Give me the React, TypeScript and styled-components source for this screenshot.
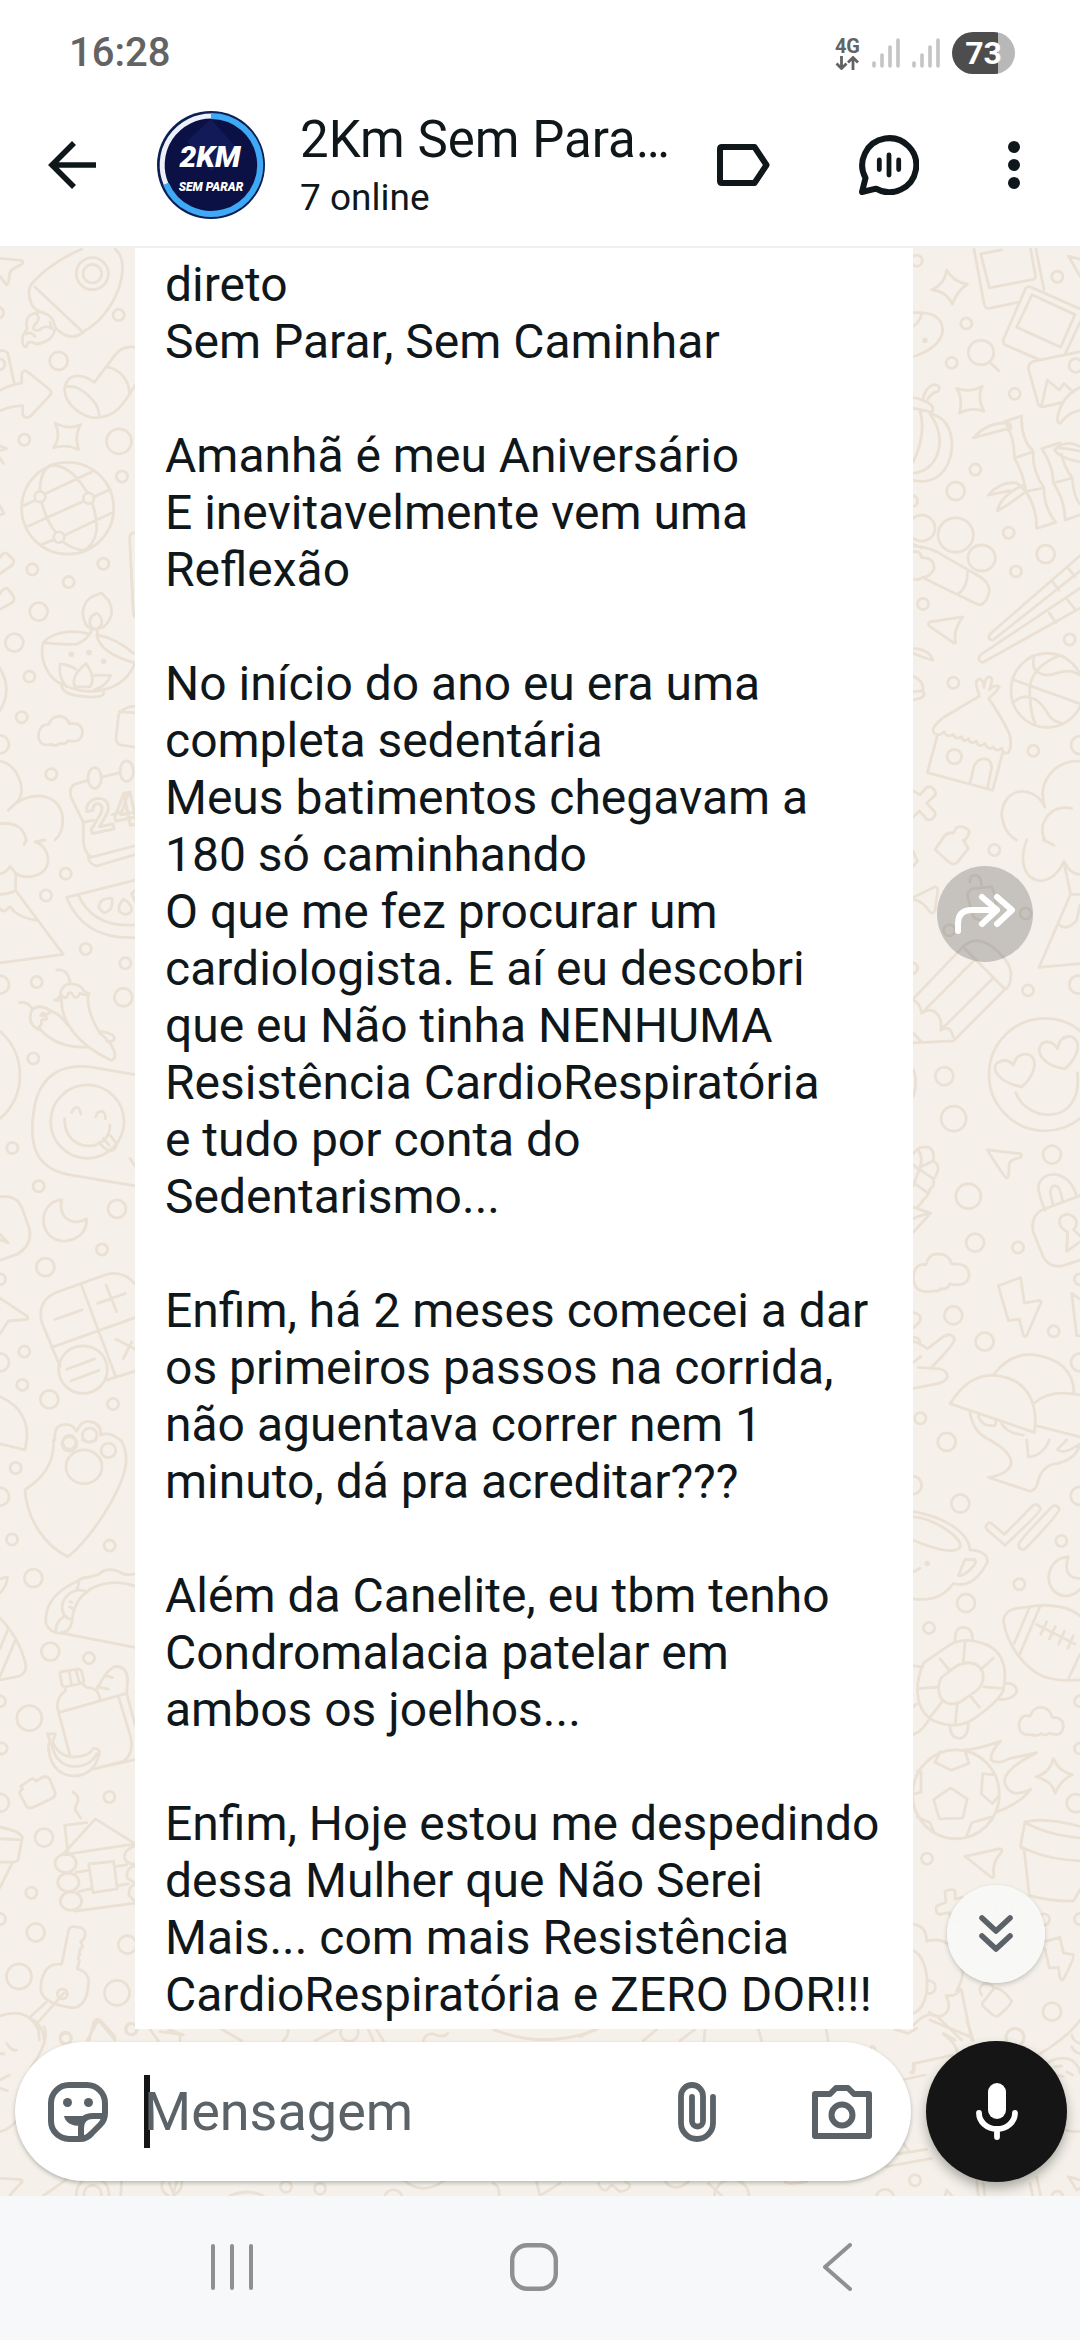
import React from "react";
import styled, { createGlobalStyle } from "styled-components";

const ink = "#0f171b";
const grey = "#5b6368";
const paper = "#f5f1ea";
const doodle = "#eae0d4";

const GlobalStyle = createGlobalStyle`
  *, *::before, *::after { box-sizing: border-box; }
  body {
    margin: 0;
    background: #fff;
    color: ${ink};
    font-family: Roboto, "Noto Sans", sans-serif;
  }
  button { font: inherit; color: inherit; }
`;

const Screen = styled.div`
  display: flex;
  flex-direction: column;
  min-height: 100vh;
`;

const StatusBar = styled.div`
  display: flex;
  align-items: center;
  justify-content: space-between;
  height: 106px;
  padding: 0 65px 0 69px;
  color: #636363;
`;

const Clock = styled.time`
  font-size: 40px;
  line-height: 48px;
  font-weight: 500;
`;

const StatusIcons = styled.div`
  display: flex;
  align-items: center;
  gap: 12px;
`;

const Network = styled.div`
  display: flex;
  flex-direction: column;
  align-items: center;
  font-size: 20px;
  line-height: 20px;
  font-weight: 700;
`;

const Battery = styled.div`
  display: flex;
  align-items: center;
  justify-content: center;
  width: 63px;
  height: 42px;
  border-radius: 21px;
  background: linear-gradient(90deg, #4d4d4d 73%, #b8b8b8 73%);
  color: #fff;
  font-size: 32px;
  line-height: 42px;
  font-weight: 700;
`;

const Header = styled.header`
  display: flex;
  align-items: center;
  padding: 4px 60px 26px 48px;
  border-bottom: 2px solid #efefef;
`;

const IconButton = styled.button`
  display: flex;
  align-items: center;
  justify-content: center;
  flex: none;
  padding: 0;
  border: 0;
  background: none;
  cursor: pointer;
`;

const Avatar = styled.div`
  display: flex;
  flex: none;
  margin: 0 35px 0 61px;
`;

const Heading = styled.div`
  display: flex;
  flex-direction: column;
  gap: 6px;
  flex: 1;
  min-width: 0;
`;

const Title = styled.h1`
  margin: 0;
  font-size: 51px;
  line-height: 60px;
  font-weight: 400;
  white-space: nowrap;
`;

const Subtitle = styled.p`
  margin: 0;
  font-size: 37px;
  line-height: 44px;
`;

const Actions = styled.div`
  display: flex;
  align-items: center;
  gap: 89px;
`;

const Chat = styled.main`
  position: relative;
  display: flex;
  flex-direction: column;
  flex: 1;
  background: ${paper};
`;

const Backdrop = styled.svg`
  position: absolute;
  inset: 0;
  width: 100%;
  height: 100%;
`;

const Messages = styled.div`
  position: relative;
  flex: 1;
  display: flex;
  padding: 0 167px 0 135px;
`;

const Bubble = styled.article`
  flex: 1;
  padding: 8px 20px 6px 30px;
  background: #fff;
`;

const Paragraph = styled.p`
  margin: 0;
  font-size: 48px;
  line-height: 57px;
  white-space: pre-wrap;

  & + & {
    margin-top: 57px;
  }
`;

const RoundButton = styled(IconButton)<{ $size: number; $top: number; $right: number; $fill: string; $raised?: boolean }>`
  position: absolute;
  top: ${(p) => p.$top}px;
  right: ${(p) => p.$right}px;
  width: ${(p) => p.$size}px;
  height: ${(p) => p.$size}px;
  border-radius: 50%;
  background: ${(p) => p.$fill};
  box-shadow: ${(p) => (p.$raised ? "0 2px 5px rgba(0, 0, 0, 0.2)" : "none")};
`;

const Composer = styled.form`
  position: relative;
  display: flex;
  align-items: center;
  gap: 15px;
  padding: 12px 13px 14px 15px;
`;

const Field = styled.div`
  display: flex;
  align-items: center;
  flex: 1;
  min-width: 0;
  height: 139px;
  padding: 0 39px 0 33px;
  border-radius: 70px;
  background: #fff;
  box-shadow: 0 2px 4px rgba(0, 0, 0, 0.25);
`;

const Caret = styled.span`
  flex: none;
  width: 6px;
  height: 73px;
  margin: 0 -6px 0 36px;
  background: #151515;
`;

const TextInput = styled.input`
  position: relative;
  flex: 1;
  width: 0;
  min-width: 0;
  height: 73px;
  padding: 0;
  border: 0;
  outline: 0;
  background: transparent;
  color: ${ink};
  font: 400 54px/73px Roboto, "Noto Sans", sans-serif;

  &::placeholder {
    color: ${grey};
    opacity: 1;
  }
`;

const FieldActions = styled.div`
  display: flex;
  align-items: center;
  gap: 96px;
`;

const MicButton = styled(IconButton)`
  width: 141px;
  height: 141px;
  border-radius: 50%;
  background: #151515;
  box-shadow: 0 6px 12px rgba(0, 0, 0, 0.3);
`;

const NavBar = styled.nav`
  display: grid;
  grid-template-columns: repeat(3, 1fr);
  align-items: center;
  height: 144px;
  padding: 0 92px 2px 81px;
  background: #f7f8fa;
`;

type Spot = [number, number];

interface Patch {
  x: number;
  y: number;
  sx: number;
  sy: number;
  small: Spot[];
  medium: Spot[];
  large?: Spot[];
  solid?: Spot[];
  ovals?: [number, number, number, number][];
  d: string;
}

const tall = { sx: 3, sy: 2.6133 };
const flat = { sx: 3, sy: 3 };

const patches: Patch[] = [
  {
    x: 0, y: 240, ...tall,
    small: [[356, 196], [73, 522], [366, 618], [97, 861], [310, 846], [206, 894], [88, 1141], [65, 1247], [154, 1396], [-6, 190], [-2, 325]],
    medium: [[176, 316], [116, 971], [43, 1052], [0, 1318]],
    large: [[357, 526]],
    solid: [[214, 1083], [267, 1078], [311, 1101]],
    ovals: [[277, 88, 48, 42], [277, 88, 28, 24], [203, 701, 138, 120], [120, 671, 16, 14], [266, 675, 16, 14], [177, 777, 16, 14], [284, 1406, 20, 27], [380, 1388, 20, 27]],
    d: `M0 48L64 53Q74 56 64 64L40 75Q30 80 28 92Q26 118 20 118L0 95
      M92 118C130 75 200 40 245 24M345 24C375 45 370 90 355 130C330 185 290 220 250 240Q210 270 165 228M92 118Q80 140 95 168Q105 185 130 190M104 122L250 242
      M110 190Q75 195 80 225Q85 232 75 240Q62 255 70 275Q80 285 82 272Q85 262 110 272Q165 265 165 225Q160 200 135 192Q120 185 108 192Q125 205 105 220Q90 240 120 235Q125 225 150 228Q160 240 150 215M80 245Q90 238 105 252
      M0 393Q30 378 65 374V350Q70 338 82 344L148 390Q158 398 148 408L92 460Q75 470 68 455V433Q30 435 0 446M0 290Q22 285 26 305L42 372
      M405 280C360 275 350 295 320 330L283 372C250 350 205 345 194 385C190 430 250 465 290 465C350 460 370 430 405 380M197 384C240 375 300 425 297 460M320 332C360 335 390 370 388 404
      M165 478Q205 498 242 482Q222 512 236 548Q200 532 160 543Q185 515 165 478Z
      M72 694L105 680M134 664L275 606M84 748L250 683M280 672L325 654M127 795L163 783M192 772L333 714M119 657Q122 590 165 586M155 588C210 590 240 630 262 660M278 690Q295 745 288 765Q280 800 250 812M125 686Q140 735 168 765M188 788Q210 805 250 812
      M305 923Q275 930 262 942Q235 975 262 1010Q280 1022 310 1012Q350 980 326 942ZM290 975Q262 985 272 1010Q290 1025 305 1005Q308 985 290 975Z
      M130 1052Q150 1030 200 1024Q240 1022 268 1030M272 1018Q276 1026 268 1030M292 1018V1032Q350 1042 400 1080M130 1052C115 1100 150 1150 185 1160C260 1195 370 1185 405 1105M130 1052Q180 1058 230 1056Q260 1045 270 1028M290 1032Q300 1080 405 1105
      M180 1108Q210 1110 228 1122M180 1108Q175 1145 200 1168M225 1168Q210 1140 258 1107Q290 1145 270 1168ZM275 1140Q290 1135 332 1138Q320 1165 285 1175M185 1160Q180 1185 240 1192Q310 1200 312 1182
      M155 1318Q115 1325 115 1293Q120 1265 146 1266Q155 1245 178 1244Q200 1245 208 1264Q248 1260 247 1288Q245 1315 205 1308Q195 1320 182 1315Q165 1325 155 1318Z
      M405 1218Q370 1220 356 1240L348 1300Q348 1318 365 1320L405 1325M358 1232L405 1236
      M250 1568V1522L214 1458Q205 1430 225 1422L262 1412M304 1404L360 1392M250 1522L280 1516M335 1502L360 1496
      M0 830Q12 812 22 820L40 835Q44 842 36 850L0 872M0 925Q12 905 24 912L40 930Q46 940 36 948L0 965M0 1120Q38 1175 0 1230
      M0 1362C50 1370 80 1430 55 1465L25 1490C80 1435 180 1440 188 1510Q190 1550 165 1568M0 1525Q70 1520 78 1568M0 538L20 545L0 550M0 570L10 584M0 695L12 715L0 718M405 765Q388 765 389 780L400 975Q402 985 405 985`,
  },
  {
    x: 0, y: 840, ...tall,
    small: [[197, 88], [138, 145], [257, 285], [376, 322], [110, 371], [100, 571], [37, 805], [116, 905], [306, 1070], [73, 1337], [67, 1424], [339, 1474], [0, 1148]],
    medium: [[136, 1116], [148, 1462], [351, 964], [370, 411], [0, 378], [0, 1365]],
    ovals: [[262, 736, 110, 96], [249, 1384, 73, 62], [269, 1555, 22, 18], [208, 1574, 20, 18]],
    d: `M72 12L80 0M105 5C150 15 160 75 115 90Q75 105 45 85L30 68Q20 85 0 88M105 5L135 0M47 85V132Q25 142 0 142M47 132L190 299L0 321M0 178Q8 192 22 180Q30 168 40 185Q65 205 112 210
      M250 0Q252 35 275 45L405 15M265 38Q262 62 290 68L405 38
      M405 105L200 150Q250 260 405 255M235 144Q280 230 405 222M335 152Q300 150 296 175Q310 200 330 182Q340 170 335 152ZM370 155Q350 175 360 188Q380 202 395 185Q395 165 370 155ZM405 160L395 140L405 132
      M170 340Q205 335 210 375M165 418Q182 415 183 395Q190 375 215 376Q245 378 252 395L268 402Q255 408 240 400Q235 415 222 410Q215 395 205 400Q200 418 190 410Q182 400 182 415Q170 422 165 418M185 415C180 470 230 535 335 576Q350 572 342 550Q330 525 300 505Q260 450 264 405M300 500Q345 505 343 520Q335 530 320 525
      M58 425Q80 420 98 442M115 495Q80 480 95 445Q115 425 155 448L140 456Q125 450 122 458Q145 460 138 470Q120 465 125 480Q110 500 115 490Q170 545 260 541M155 448Q180 455 205 485
      M0 500C80 560 80 670 0 728M405 613L270 593C150 580 115 650 105 690C80 800 110 860 210 875L405 904M390 832L405 852
      M215 712Q222 695 235 700Q243 708 243 716M287 724Q292 705 310 710Q318 716 316 728M194 728C190 820 330 820 330 745M297 790Q310 805 325 812Q345 815 350 795Q335 775 325 768M310 780L328 798
      M0 932Q50 928 65 960L88 1015Q98 1060 50 1083L0 1098M0 1045L25 1053L0 1030
      M186 940C110 945 110 1050 198 1048Q260 1040 260 990Q215 1010 190 980Q178 960 186 940ZM0 1197L82 1245Q86 1250 80 1253L25 1257L0 1290
      M405 1160Q370 1125 320 1135L170 1182Q110 1205 125 1260L180 1375M155 1326L405 1248M243 1160L347 1402M315 1413L405 1388M165 1253L246 1228M293 1211L376 1185M318 1163L350 1233M348 1305L405 1330M370 1355L395 1312M200 1383L284 1356M214 1413L297 1386
      M0 1455C70 1480 85 1530 80 1568M165 1568Q160 1525 200 1528Q215 1525 230 1545Q245 1515 270 1520Q305 1525 302 1555Q330 1545 360 1568`,
  },
  {
    x: 0, y: 1440, ...tall,
    small: [[47, 73], [36, 260], [329, 276], [267, 570], [328, 933], [94, 1183], [0, 683], [5, 806], [0, 1252], [197, 1562], [395, 1540]],
    medium: [[100, 361], [151, 553], [132, 1039], [107, 1287], [0, 148], [0, 948], [382, 1319]],
    large: [[88, 727], [57, 1402], [351, 1445]],
    ovals: [[252, 70, 54, 44], [208, 10, 22, 19], [325, 27, 22, 19], [197, 1106, 32, 24], [205, 1156, 32, 24], [213, 1205, 32, 24], [187, 1448, 15, 13]],
    d: `M0 10L75 26L80 0M160 0C165 60 130 100 75 130C80 210 140 280 204 305C270 260 370 130 378 60Q380 20 362 0M248 0Q265 12 288 0
      M0 363L22 358Q22 380 0 400M0 465Q60 520 78 590Q78 612 55 618L0 627M24 495L0 545M45 525L0 618
      M405 350Q375 355 360 345Q320 330 295 352L268 358Q240 360 230 370Q130 410 138 480Q150 505 185 505L405 542M405 382Q330 360 270 390Q220 420 217 470Q210 505 185 502M238 368L232 388M262 398Q235 385 210 400Q180 420 188 448Q195 465 212 468M190 462Q165 478 168 500M208 436L218 440M210 422L216 424
      M180 612Q178 605 188 605L235 598Q245 600 247 612L252 628Q250 635 240 637L195 645Q185 645 184 632ZM208 608L215 640M228 602L238 634M195 648Q200 655 190 660Q165 680 175 710L210 825M248 635Q255 648 268 648Q295 650 300 675M178 712L380 662M292 650Q320 600 345 592Q380 590 383 625L380 662Q395 710 405 745M356 672L390 770Q405 820 370 840L278 860L405 835M315 615L338 621M292 645L325 651
      M142 768H166L158 790Q185 840 250 825Q270 820 280 806Q300 805 298 820Q280 880 215 878Q150 870 145 800L150 785ZM155 795Q165 845 215 853Q270 855 290 820
      M62 905L90 888Q103 882 108 892L130 880Q145 878 150 888L165 920Q168 932 155 937L100 960Q85 965 78 955L58 922Q62 915 68 912Z
      M218 920Q240 930 232 948Q220 965 232 975L242 988M204 1078L194 1007L260 1000M188 1084L286 990L405 1055M188 1084L400 1056M228 1130L268 1124M236 1180L276 1172M225 1231L405 1210M345 1115L380 1110M350 1165L385 1160M266 1108L341 1101L352 1173L279 1183ZM405 1060Q365 1075 375 1095Q385 1110 405 1108M405 1112Q375 1120 382 1145L405 1158M405 1162Q385 1165 387 1190L405 1206
      M0 1012Q60 1022 67 1038L55 1095Q50 1105 35 1103H0M0 1042L65 1045M38 1103L0 1170
      M185 1370L205 1285Q208 1270 222 1272L245 1275Q258 1282 255 1295Q255 1305 242 1310L248 1325Q235 1330 240 1345Q230 1350 238 1360L232 1382C275 1392 268 1420 260 1450Q245 1490 205 1482Q120 1470 122 1430Q128 1365 185 1370ZM192 1445L118 1518M138 1470L88 1510L108 1520
      M0 1505Q80 1480 115 1540L118 1568M110 1520Q132 1545 132 1568M268 1568L282 1520Q292 1508 305 1520L345 1560`,
  },
  {
    x: 910, y: 240, ...tall,
    small: [[20, 54], [442, 96], [169, 218], [125, 321], [314, 402], [196, 600], [296, 765], [318, 866], [39, 951], [479, 1044], [130, 1157], [370, 1335], [6, 682]],
    medium: [[137, 656], [407, 821], [510, 1320]],
    solid: [[45, 262]],
    ovals: [[497, 328, 20, 18], [213, 294, 38, 32], [137, 771, 53, 45], [215, 831, 41, 34], [35, 753, 40, 34], [412, 1177, 109, 97], [133, 1350, 22, 19]],
    d: `M110 78Q130 110 172 115Q140 135 127 168Q110 135 66 130Q105 115 110 78Z
      M192 24L222 165Q225 182 240 178L330 162M212 36L238 125L370 103Q378 100 376 92L362 24M212 36L275 26M378 24L402 130M360 122Q350 120 345 130L280 260Q278 272 288 275L385 312M360 122L510 180M366 143L320 228L452 280L495 195ZM510 215L465 298
      M510 292L370 317Q352 325 356 340L385 430Q392 438 405 435L455 425M395 432L412 366L448 392L462 375L490 398M510 385Q450 410 442 470Q445 485 455 475Q475 450 510 445M510 50L475 42L510 95
      M10 190Q95 185 98 235Q95 280 10 305M35 192Q30 215 10 225M240 320L267 342M140 388Q180 400 217 382Q200 412 222 448Q185 435 148 453Q160 415 140 388Z
      M10 412Q38 415 62 430Q75 440 65 450Q45 445 10 440M38 420Q45 385 70 378Q95 378 85 395Q60 400 50 422M68 455C120 470 125 510 126 540C120 610 70 640 10 628M60 455C110 510 95 600 10 610M30 445Q50 505 10 580
      M285 474L335 460Q332 520 370 553Q365 600 402 648Q400 695 437 738L380 754Q380 700 348 657Q340 610 313 570Q315 520 285 474ZM313 570L370 553M348 657L402 648M190 517Q240 470 300 480Q310 500 285 495ZM235 667Q270 630 320 635L348 657Q300 690 262 708Q270 670 340 640M235 667L300 655
      M395 545L450 530M395 545Q430 590 430 635Q465 680 465 732L510 718M430 635L487 622M455 560Q460 590 487 622Q490 670 510 690M433 548Q470 520 510 540M433 548Q450 570 510 580M440 543Q480 545 510 552
      M510 825L240 1030Q230 1045 250 1045L510 865M510 910L210 1085Q200 1100 218 1104L510 962M425 890L447 915M472 855L495 880M418 975L438 1000M472 940L495 965
      M10 800Q60 800 110 830Q170 860 210 880Q245 900 236 925Q225 955 205 953Q90 905 38 882Q25 890 10 886M10 815Q30 810 35 830Q75 830 72 860Q60 880 38 882M172 865Q175 905 145 925M10 795L35 805
      M158 985L60 998Q50 1003 60 1010L130 1052Q138 1056 136 1046Q130 1020 158 985ZM10 1068Q60 1070 68 1098Q50 1095 10 1080M10 1140Q45 1155 38 1178L10 1180M38 1178Q55 1195 10 1202
      M313 1150L510 1212M450 1085Q350 1120 360 1190Q362 1240 375 1262M372 1092C360 1130 400 1145 440 1132Q480 1120 505 1135M315 1205Q340 1185 375 1200Q400 1215 415 1240Q430 1260 455 1262
      M208 1192C200 1165 190 1150 210 1147Q220 1150 222 1170Q225 1140 240 1142Q252 1145 238 1175Q255 1160 268 1168Q255 1185 236 1198Q270 1240 298 1290Q308 1325 295 1340Q280 1345 275 1328Q258 1340 250 1325Q232 1335 225 1315Q205 1330 200 1310Q180 1320 175 1303Q160 1315 155 1298Q135 1308 130 1292Q110 1302 102 1285Q85 1300 72 1288Q60 1275 100 1248ZM82 1295L52 1392L248 1438L278 1340M180 1420L192 1375Q205 1350 235 1358Q250 1370 242 1390L232 1435
      M10 1440L30 1450L50 1430Q65 1425 75 1440Q80 1450 70 1455L50 1472L75 1495Q78 1510 60 1515Q50 1518 45 1508L28 1492L10 1508M95 1568Q110 1545 130 1550L140 1535Q160 1528 178 1545Q175 1560 165 1568
      M510 1362C430 1360 380 1420 405 1482C370 1420 280 1430 275 1500Q280 1550 320 1568M485 1485Q420 1475 398 1530Q395 1555 405 1568`,
  },
  {
    x: 910, y: 840, ...tall,
    small: [[253, 26], [347, 192], [118, 236], [354, 393], [324, 1065], [431, 1284], [31, 1511], [6, 335], [510, 1148]],
    medium: [[103, 617], [195, 1052], [426, 822], [130, 1242], [224, 1311], [505, 378], [510, 1365]],
    large: [[131, 728], [175, 931]],
    ovals: [[405, 613, 168, 147]],
    d: `M95 0L75 25L120 60Q135 68 145 55L175 22L160 0M10 68L22 55L10 30M10 150L75 122Q85 125 83 135L75 185Q70 195 60 188Q40 160 10 155
      M180 110Q178 92 195 92Q212 92 215 118M172 145Q175 132 185 128L245 122Q255 140 258 165Q258 190 225 210Q200 210 190 200Z
      M350 0C325 60 345 105 395 107Q440 100 462 55Q480 90 510 90M400 0L432 14M462 60L482 142H510M480 145L387 333L510 323M445 220Q470 240 500 210L510 170
      M10 415L160 278Q195 250 240 275Q310 320 302 360Q300 385 285 390L130 525L10 530M160 280L285 390M35 453L195 312M92 497L248 362M10 418Q30 425 35 453C70 430 100 460 92 497Q120 480 130 515M10 505L35 528M10 600Q25 635 10 670
      M335 645C270 635 240 600 262 582Q290 568 310 588Q320 555 355 560C390 575 370 620 335 645ZM465 598C400 590 375 555 395 532Q420 518 443 545Q450 510 485 514C520 530 500 570 465 598ZM317 660C350 740 520 750 502 608
      M232 810L332 820Q338 825 330 830Q298 835 297 850Q298 885 288 883Q275 870 232 810Z
      M10 820Q30 795 60 805Q75 815 70 838Q90 850 82 868Q75 885 70 885Q75 905 60 912Q55 930 40 940Q30 955 20 960M10 850L70 885M10 895L50 920M30 855L70 838M25 810Q40 830 30 855L10 905M10 960L62 975L10 1025M10 990Q30 980 62 975
      M405 968Q385 925 385 905C395 860 480 860 500 932M430 955Q410 900 438 904Q450 905 458 945M510 930L395 967Q360 985 370 1025L400 1090Q420 1120 460 1112L510 1098M510 1050L470 1075L473 1025C440 1010 440 980 475 978Q505 985 498 1010L490 1018L510 1035
      M70 1178Q10 1190 10 1140Q15 1105 48 1110Q55 1080 85 1082Q115 1080 125 1108Q180 1105 177 1140Q170 1170 120 1160Q110 1178 92 1172Q85 1182 70 1178Z
      M265 1165L332 1143L343 1210L390 1203Q397 1208 390 1215L350 1295Q345 1300 340 1295L328 1252L295 1256ZM510 1200L485 1185L500 1295L510 1296
      M10 1300Q30 1300 30 1315M10 1235Q40 1240 28 1260L10 1275M10 1310Q40 1320 52 1330L100 1298Q125 1285 134 1305Q130 1320 65 1378M25 1378L90 1382Q115 1388 112 1405Q100 1420 75 1422L10 1433M10 1365L32 1350
      M250 1398Q300 1340 370 1345Q490 1360 492 1445M120 1473Q180 1390 260 1400C360 1410 385 1480 373 1548ZM375 1470Q420 1435 510 1450M375 1530L510 1560M180 1497Q190 1550 240 1568M205 1505Q215 1535 255 1530L258 1520M275 1525Q290 1550 340 1555`,
  },
  {
    x: 910, y: 1440, ...tall,
    small: [[454, 264], [328, 377], [57, 491], [51, 1094], [402, 1253], [510, 683], [510, 806], [510, 1252]],
    medium: [[110, 5], [151, 166], [168, 426], [8, 118], [509, 146], [497, 949], [426, 1494], [315, 1562], [282, 1222]],
    solid: [[52, 323]],
    ovals: [[138, 926, 130, 116]],
    d: `M240 0Q310 35 303 65Q290 90 235 98L360 134Q380 130 385 105Q400 65 440 62Q500 50 510 10M350 0L355 45Q400 40 418 0M442 25Q460 40 510 10M442 25L470 0
      M228 225Q235 210 250 222L283 247L370 170Q385 165 392 180Q390 190 285 275L232 235Q226 230 228 225ZM425 175Q440 165 448 180Q450 190 345 285Q330 290 325 275Q325 265 425 175Z
      M10 187C100 200 175 240 180 287Q235 290 232 320Q190 390 130 375Q90 425 10 415M10 200C70 205 160 255 150 280Q130 305 10 262M145 355L165 312L195 313Q200 320 190 330Q165 355 145 355ZM10 345L30 335
      M475 305C400 310 395 405 470 408Q495 405 510 390M475 305Q455 360 510 362
      M280 470Q285 445 320 440L390 432Q470 430 510 460M280 470C290 540 350 600 400 618Q450 632 510 627M360 435L312 532M390 435L328 562M380 482L495 533M410 475L392 508M436 487L418 520M463 500L446 533M490 512L473 545M510 560L475 625
      M42 582L120 535Q160 515 215 530C290 550 290 610 280 655Q260 690 180 735Q130 755 75 735C15 710 10 640 42 582ZM95 620L140 590Q190 570 215 600Q230 630 200 655L150 685Q110 700 90 670Q80 640 95 620ZM165 530L160 580M90 572L120 603M250 570L212 600M222 645L282 650M182 670L208 698M142 690L136 740M100 680L62 722M22 650L82 646M135 525Q135 488 160 490Q190 490 187 525M283 635Q322 635 320 658Q310 680 265 678M120 745Q120 780 150 780Q175 775 175 740M10 590L38 593M20 690L10 697M62 722Q40 760 10 770
      M365 770Q325 775 327 740Q335 715 360 722Q370 698 393 698Q420 700 427 725Q462 725 460 750Q455 778 418 766Q405 775 395 767Q380 775 365 770Z
      M122 909L172 938L158 988L88 990L71 940ZM90 815L75 842L123 863L177 845L165 812M252 875L218 872L214 925L247 950L266 930M22 865L33 868V920L12 925M22 985L60 1000L72 1025M245 985L185 1000L170 1035M165 810Q205 808 272 787Q240 815 243 835Q260 850 300 832L380 817Q280 860 284 895Q300 940 362 913Q330 950 260 972
      M430 832Q445 865 487 875Q450 890 436 923Q425 890 378 880Q420 870 430 832ZM165 1088L270 1068Q280 1070 272 1080Q245 1105 252 1140Q250 1148 240 1140Z
      M345 998Q400 985 510 1010M345 998Q400 1030 510 1040M345 998L332 1058Q330 1068 342 1068M332 1062Q400 1095 510 1100M342 1068L358 1190Q410 1205 490 1205L510 1175
      M105 1180Q120 1172 135 1177V1200L155 1195M105 1180L108 1208L80 1218Q75 1235 88 1240L118 1235Q125 1260 140 1265L160 1250
      M405 1310L450 1300L460 1340L490 1345Q495 1350 460 1410Q455 1415 450 1405L445 1378L418 1380L405 1330M215 1450Q200 1430 225 1420Q245 1420 250 1430M218 1470L250 1435Q270 1425 305 1465Q305 1475 265 1505Q255 1512 220 1480Q215 1475 218 1470
      M10 1265Q50 1270 50 1310Q90 1300 120 1320M140 1440Q165 1400 155 1380M108 1452Q130 1490 95 1505Q70 1510 58 1495M108 1452Q140 1455 152 1435M10 1335C60 1350 70 1480 10 1498M55 1412Q80 1415 75 1435Q70 1450 50 1445M10 1530Q50 1490 80 1505L155 1568M155 1440L185 1568M100 1550L135 1568`,
  },
  {
    x: 0, y: 2020, ...flat,
    small: [[858, 500], [960, 506], [197, 57], [393, 27]],
    medium: [[1180, 536], [1048, 37]],
    ovals: [[278, 522, 49, 49], [278, 522, 26, 26]],
    d: `M132 20Q150 60 95 140M20 70Q35 95 50 90M0 100L12 102M0 180L28 165M0 205L22 212M0 335Q30 330 60 290
      M0 475L60 478Q72 482 62 490L30 525M130 527L200 478M365 480L362 527M490 480Q475 510 505 527M545 480Q550 510 520 527M508 490L520 520L530 485M690 527Q740 505 790 527M1210 480Q1270 530 1335 480M1480 490Q1500 500 1497 527
      M262 60L295 0L345 60M450 28L475 62M480 35L540 42V62M505 28L550 45M665 28L725 62M865 28Q865 50 850 62M945 62L1010 28M1105 28L1120 62M1130 30L1150 62M1270 62Q1275 40 1300 42Q1330 55 1343 40M1479 28Q1635 90 1791 28M1610 487L1620 527L1680 490`,
  },
  {
    x: 580, y: 2020, ...flat,
    small: [[1005, 481], [1432, 530]],
    medium: [[1305, 52], [915, 535]],
    ovals: [[455, 530, 52, 52]],
    d: `M0 50L45 28M190 62L230 28M300 62L345 28M375 28L372 62M535 28L545 62M738 28L745 62M945 28L985 40L1010 25M870 90Q875 70 885 85
      M965 180L1035 165M992 158L1003 150V130L1120 105M1000 130V160M1050 0L1170 50M1160 0L1180 62M1090 42Q1130 70 1132 100M1330 130Q1460 60 1500 0M1475 45Q1480 65 1500 70M1475 80Q1485 100 1500 100
      M1400 130Q1440 105 1475 120Q1500 140 1500 160M1425 140L1445 138M1460 155L1478 165M1430 165L1450 170M1455 330Q1480 338 1500 333
      M930 405L1040 388M920 440L1055 415M985 390L970 370M1095 527L1100 510L1115 527M1190 485L1195 527M1210 490L1215 527M1350 490L1358 527M1370 470L1382 527M1500 480L1465 470L1490 510L1500 505M385 490L425 527M615 485Q625 495 680 485M255 485Q285 520 325 485M55 490Q65 515 80 510L95 495L120 515Q150 510 150 495L130 480`,
  },
];

function Wallpaper() {
  return (
    <Backdrop viewBox="0 248 1080 1948" preserveAspectRatio="xMidYMin slice" aria-hidden="true">
      <g fill="none" stroke={doodle} strokeWidth="2.8" strokeLinecap="round" strokeLinejoin="round">
        {patches.map((p, i) => {
          const at = ([x, y]: Spot) => ({ cx: p.x + x / p.sx, cy: p.y + y / p.sy });
          return (
            <g key={i}>
              <path d={p.d} vectorEffect="non-scaling-stroke" transform={`translate(${p.x} ${p.y}) scale(${1 / p.sx} ${1 / p.sy})`} />
              {p.small.map((s, k) => <circle key={`s${k}`} {...at(s)} r="5.6" />)}
              {p.medium.map((s, k) => <circle key={`m${k}`} {...at(s)} r="9" />)}
              {p.large?.map((s, k) => <circle key={`l${k}`} {...at(s)} r="12.5" />)}
              {p.solid?.map((s, k) => <circle key={`f${k}`} {...at(s)} r="2.8" fill={doodle} stroke="none" />)}
              {p.ovals?.map(([x, y, rx, ry], k) => <ellipse key={`o${k}`} {...at([x, y])} rx={rx / p.sx} ry={ry / p.sy} />)}
            </g>
          );
        })}
        <text x="90" y="834" transform="rotate(-12 90 834)" fontFamily="Roboto, sans-serif" fontSize="46" fontWeight="700">24</text>
      </g>
    </Backdrop>
  );
}

function Signal() {
  return (
    <svg width="28" height="30" viewBox="0 0 28 30" stroke="#c4c4c4" strokeWidth="3.6" strokeLinecap="round" aria-hidden="true">
      <path d="M2 25V28M10 17V28M18 9V28M26 2V28" />
    </svg>
  );
}

function GroupPhoto() {
  return (
    <svg width="108" height="108" viewBox="0 0 108 108" role="img" aria-label="2Km Sem Parar">
      <circle cx="54" cy="54" r="54" fill="#0b1f52" />
      <circle cx="54" cy="54" r="46" fill="#0b1045" />
      <path d="M54 8L82 40L54 60L30 30Z" fill="#131a58" />
      <path d="M54 5A49 49 0 1 1 9 73" fill="none" stroke="#3fa9f5" strokeWidth="6" />
      <path d="M9 73A49 49 0 0 1 54 5" fill="none" stroke="#eef0fa" strokeWidth="5" />
      <g fill="#fff" fontFamily="Roboto, sans-serif" fontWeight="900" fontStyle="italic" textAnchor="middle">
        <text x="53" y="56" fontSize="30">2KM</text>
        <text x="54" y="80" fontSize="12">SEM PARAR</text>
      </g>
    </svg>
  );
}

const message = [
  "direto\nSem Parar, Sem Caminhar",
  "Amanhã é meu Aniversário\nE inevitavelmente vem uma\nReflexão",
  "No início do ano eu era uma\ncompleta sedentária\nMeus batimentos chegavam a\n180 só caminhando\nO que me fez procurar um\ncardiologista. E aí eu descobri\nque eu Não tinha NENHUMA\nResistência CardioRespiratória\ne tudo por conta do\nSedentarismo...",
  "Enfim, há 2 meses comecei a dar\nos primeiros passos na corrida,\nnão aguentava correr nem 1\nminuto, dá pra acreditar???",
  "Além da Canelite, eu tbm tenho\nCondromalacia patelar em\nambos os joelhos...",
  "Enfim, Hoje estou me despedindo\ndessa Mulher que Não Serei\nMais... com mais Resistência\nCardioRespiratória e ZERO DOR!!!",
];

export default function App() {
  return (
    <Screen>
      <GlobalStyle />
      <StatusBar>
        <Clock>16:28</Clock>
        <StatusIcons>
          <Network>
            4G
            <svg width="24" height="14" viewBox="0 0 24 14" fill="none" stroke="#636363" strokeWidth="2.8" aria-hidden="true">
              <path d="M6.500 0V12M1.500 7.500L6.500 12.500L11.500 7.500M18 14V2M13 6.500L18 1.500L23 6.500" />
            </svg>
          </Network>
          <Signal />
          <Signal />
          <Battery>73</Battery>
        </StatusIcons>
      </StatusBar>

      <Header>
        <IconButton type="button" aria-label="Voltar">
          <svg width="48" height="48" viewBox="0 0 48 48" fill="none" stroke={ink} strokeWidth="5.600">
            <path d="M48 24H5M26 2L4 24L26 46" />
          </svg>
        </IconButton>
        <Avatar>
          <GroupPhoto />
        </Avatar>
        <Heading>
          <Title>2Km Sem Para…</Title>
          <Subtitle>7 online</Subtitle>
        </Heading>
        <Actions>
          <IconButton type="button" aria-label="Etiqueta">
            <svg width="53" height="42" viewBox="0 0 53 42" fill="none" stroke={ink} strokeWidth="6" strokeLinejoin="round">
              <path d="M5 3H37.500L49.500 21L37.500 39H5Q3 39 3 37V5Q3 3 5 3Z" />
            </svg>
          </IconButton>
          <IconButton type="button" aria-label="Conversa de voz">
            <svg width="60" height="60" viewBox="0 0 60 60" fill="none" stroke={ink} strokeWidth="6" strokeLinejoin="round" strokeLinecap="round">
              <path d="M6.500 43A27 27 0 1 1 17 53.700L3 57Z" />
              <path strokeWidth="4.800" d="M20.300 25V34.500M30 20V40M39.700 25V34.500" />
            </svg>
          </IconButton>
          <IconButton type="button" aria-label="Mais opções">
            <svg width="12" height="48" viewBox="0 0 12 48" fill={ink}>
              <circle cx="6" cy="6" r="6" />
              <circle cx="6" cy="24" r="6" />
              <circle cx="6" cy="42" r="6" />
            </svg>
          </IconButton>
        </Actions>
      </Header>

      <Chat>
        <Wallpaper />
        <Messages>
          <Bubble>
            {message.map((text) => (
              <Paragraph key={text}>{text}</Paragraph>
            ))}
          </Bubble>
          <RoundButton type="button" aria-label="Encaminhar" $size={96} $top={618} $right={47} $fill="rgba(90, 90, 90, 0.3)">
            <svg width="60" height="42" viewBox="0 0 60 42" fill="none" stroke="#fff" strokeWidth="6" strokeLinecap="round" strokeLinejoin="round">
              <path d="M3 38V31Q3 17 17 17H42M27 4L42 17L27 31M42 4L57 17L42 31" />
            </svg>
          </RoundButton>
          <RoundButton type="button" aria-label="Ir para o fim" $size={98} $top={1637} $right={35} $fill="rgba(248, 248, 248, 0.95)" $raised>
            <svg width="34" height="38" viewBox="0 0 34 38" fill="none" stroke={grey} strokeWidth="5.600" strokeLinecap="round" strokeLinejoin="round">
              <path d="M3 3L17 16L31 3M3 21L17 34L31 21" />
            </svg>
          </RoundButton>
        </Messages>

        <Composer onSubmit={(e: React.FormEvent) => e.preventDefault()}>
          <Field>
            <IconButton type="button" aria-label="Figurinhas">
              <svg width="60" height="60" viewBox="0 0 60 60" fill="none" stroke={grey} strokeWidth="6" strokeLinejoin="round">
                <path d="M32 57H21A18 18 0 0 1 3 39V21A18 18 0 0 1 21 3H39A18 18 0 0 1 57 21V31Q57 38 52 43L44 51Q39 57 32 57Z" />
                <path d="M33 56V46Q33 34 45 34H56" />
                <path d="M16 34H38L33 44Q18 44 16 34Z" fill={grey} stroke="none" />
                <circle cx="19.500" cy="20.500" r="4.500" fill={grey} stroke="none" />
                <circle cx="40.500" cy="20.500" r="4.500" fill={grey} stroke="none" />
              </svg>
            </IconButton>
            <Caret />
            <TextInput type="text" placeholder="Mensagem" aria-label="Mensagem" />
            <FieldActions>
              <IconButton type="button" aria-label="Anexar">
                <svg width="38" height="60" viewBox="0 0 38 60" fill="none" stroke={grey} strokeWidth="5.800" strokeLinecap="round">
                  <path d="M35 15V41A16 16 0 0 1 3 41V14A11 11 0 0 1 25 14V39A5.500 5.500 0 0 1 14 39V15" />
                </svg>
              </IconButton>
              <IconButton type="button" aria-label="Câmera">
                <svg width="60" height="54" viewBox="0 0 60 54" fill="none" stroke={grey} strokeWidth="6" strokeLinejoin="round">
                  <path d="M3 9H18L24 3H36L42 9H57V51H3Z" />
                  <circle cx="30" cy="30" r="10.500" />
                </svg>
              </IconButton>
            </FieldActions>
          </Field>
          <MicButton type="button" aria-label="Gravar áudio">
            <svg width="42" height="57" viewBox="0 0 42 57" fill="none" stroke="#fff" strokeWidth="5.800" strokeLinecap="round">
              <rect x="12" y="0" width="18" height="36" rx="9" fill="#fff" stroke="none" />
              <path d="M3 30A18 16 0 0 0 39 30M21 46V54" />
            </svg>
          </MicButton>
        </Composer>
      </Chat>

      <NavBar>
        <IconButton type="button" aria-label="Recentes">
          <svg width="42" height="46" viewBox="0 0 42 46" stroke="#8f9092" strokeWidth="4" strokeLinecap="round">
            <path d="M2 2V44M21 2V44M40 2V44" />
          </svg>
        </IconButton>
        <IconButton type="button" aria-label="Início">
          <svg width="48" height="48" viewBox="0 0 48 48" fill="none" stroke="#8f9092" strokeWidth="4.400">
            <rect x="2.200" y="2.200" width="43.600" height="43.600" rx="15" />
          </svg>
        </IconButton>
        <IconButton type="button" aria-label="Voltar à tela anterior">
          <svg width="30" height="48" viewBox="0 0 30 48" fill="none" stroke="#8f9092" strokeWidth="4" strokeLinecap="round" strokeLinejoin="round">
            <path d="M28 2L3 24L28 46" />
          </svg>
        </IconButton>
      </NavBar>
    </Screen>
  );
}
